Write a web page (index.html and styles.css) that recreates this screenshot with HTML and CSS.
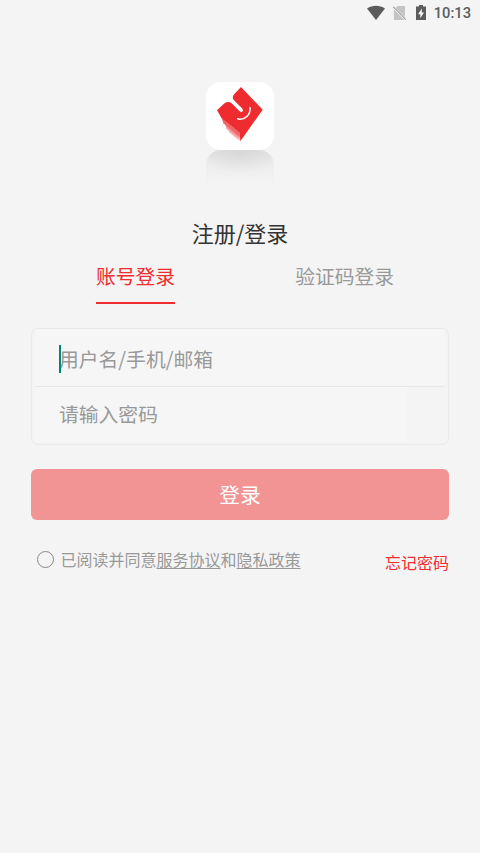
FILE: index.html
```html
<!DOCTYPE html>
<html lang="zh-CN">
<head>
<meta charset="utf-8">
<meta name="viewport" content="width=device-width, initial-scale=1">
<title>注册/登录</title>
<link rel="stylesheet" href="styles.css">
</head>
<body>
<header class="status">
  <svg class="wifi" width="20" height="16" viewBox="0 0 20 16"><path d="M1 3.6C6.2-.2 13.8-.2 19 3.6L10 15z"/></svg>
  <svg class="nosim" width="13" height="16" viewBox="0 0 13 16"><path d="M4.5 1H12v11.2L2.5 2.8zM.8 4.2L11.2 15H1z"/><path class="slash" d="M.3 1.8L12.7 14.6"/></svg>
  <svg class="battery" width="10" height="16" viewBox="0 0 10 16"><path fill-rule="evenodd" d="M3 0h4v1.6h3V15H0V1.6h3zM5.8 3.4L2 9.2h2.3v4L8 7.4H5.8z"/></svg>
  <span class="time">10:13</span>
</header>
<main class="page">
  <div class="brand">
    <div class="logo">
      <svg width="68" height="68" viewBox="30 30 204 204">
        <path fill="#fac4c5" d="M94 160L100 182 131 207V180z"/>
        <path fill="#f59698" d="M85 148L91 170 131 202V175z"/>
        <path fill="#f16669" d="M76 136L82 154 131 195V170z"/>
        <path fill="#ee2c2f" d="M135 45L200 113 133 208 131 181 76 137 63 115 83 96Q92 87 102 91Q106 92 110 97L131 118Q136 122 140 118 142 114 138 109L116 87Q105 77 115 66z"/>
        <path fill="none" stroke="#fff" stroke-width="4.5" stroke-linecap="round" d="M162 107C165 127 146 147 125 140"/>
      </svg>
    </div>
    <div class="reflection"></div>
  </div>
  <h1 class="title">注册/登录</h1>
  <nav class="tabs">
    <a class="tab active">账号登录</a>
    <a class="tab">验证码登录</a>
  </nav>
  <form class="fields">
    <div class="field user"><i class="caret"></i>用户名/手机/邮箱</div>
    <div class="field password"><span class="entry">请输入密码</span></div>
  </form>
  <div class="submit">登录</div>
  <footer class="options">
    <span class="radio"></span>
    <span class="agree">已阅读并同意<u>服务协议</u>和<u>隐私政策</u></span>
    <a class="forgot">忘记密码</a>
  </footer>
</main>
</body>
</html>
```
FILE: styles.css
```css
* { box-sizing: border-box; }
body {
  margin: 0;
  min-height: 853px;
  background: #f4f4f4;
  color: #999;
  font-family: "Noto Sans CJK SC", sans-serif;
}
svg { display: block; }
.status {
  display: flex;
  align-items: center;
  justify-content: flex-end;
  height: 26px;
  padding-right: 9px;
  fill: #5c5c5c;
}
.wifi { margin-right: 7px; }
.nosim { margin-right: 10px; fill: #c4c4c4; }
.slash { stroke: #a2a2a2; stroke-width: 1.2; }
.battery { margin-right: 8px; }
.time {
  color: #5c5c5c;
  font: 500 14.7px/27px Roboto, sans-serif;
}
.page { padding: 56px 31px 0; }
.brand { width: 68px; margin: 0 auto; }
.logo {
  height: 68px;
  border-radius: 15px;
  background: #fff;
  overflow: hidden;
}
.reflection {
  height: 34px;
  border-radius: 15px 15px 0 0;
  background: radial-gradient(ellipse 60% 70% at 50% 0, rgba(205, 205, 205, .6), transparent), linear-gradient(#e3e3e3, #eee 50%, #f4f4f4);
}
.title {
  margin: 31px 0 2px;
  color: #333;
  font-size: 22px;
  font-weight: 400;
  line-height: 34px;
  text-align: center;
}
.tabs {
  display: flex;
  justify-content: space-between;
  height: 53px;
  padding: 0 55px 0 65px;
}
.tab { height: 53px; font-size: 19.75px; line-height: 50px; }
.active { color: #f12c2f; border-bottom: 2px solid #f12c2f; }
.fields {
  height: 117px;
  margin: 24px 0 0;
  border: 1px solid #e9e9e9;
  border-radius: 7px;
  background: #f4f4f4;
  font-size: 19.8px;
}
.field { position: relative; }
.user {
  height: 58px;
  margin: 0 3px;
  padding-left: 24px;
  background: #f6f6f6;
  line-height: 60px;
  border-bottom: 1px solid #e8e8e8;
}
.caret { position: absolute; left: 24px; top: 16px; width: 2px; height: 28px; background: #008577; }
.password { height: 57px; padding: 0 3px; }
.entry {
  display: block;
  width: 372px;
  height: 54px;
  padding-left: 24px;
  background: #f6f6f6;
  line-height: 54px;
}
.submit {
  height: 51px;
  margin-top: 24px;
  border-radius: 6px;
  background: #f29494;
  color: #fff;
  font-size: 20.7px;
  line-height: 51px;
  text-align: center;
}
.options {
  display: flex;
  height: 42px;
  margin-top: 23px;
  padding-left: 6px;
  font-size: 16px;
  line-height: 32px;
}
.radio {
  width: 17px;
  height: 17px;
  margin: 8px 6.5px 0 0;
  border: 1px solid #888;
  border-radius: 50%;
}
.agree u { text-underline-offset: 2px; text-decoration-thickness: 1px; }
.forgot { margin-left: auto; color: #f12c2f; line-height: 38px; }
```
